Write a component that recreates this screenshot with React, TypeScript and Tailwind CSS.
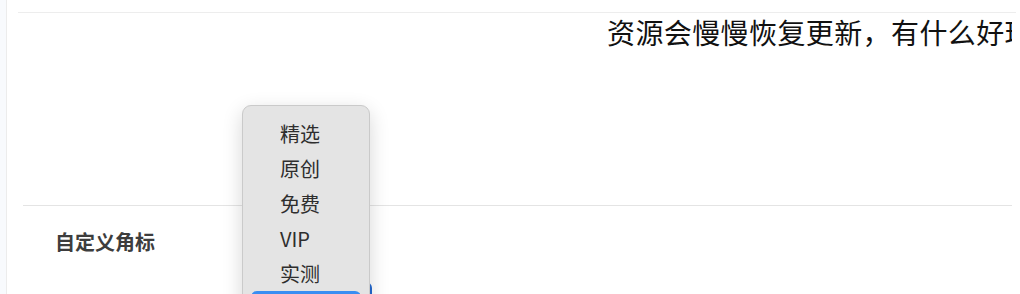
const cjk = "font-['Noto_Sans_CJK_SC','Noto_Sans',sans-serif]";

const badges = ['精选', '原创', '免费', 'VIP', '实测'];

function BadgeMenu() {
  return (
    <>
      {/* the focused select sitting under the native menu */}
      <div className="absolute left-[250px] top-[282px] h-[34px] w-[122px] rounded-md border-[3px] border-[#2469d0]" />
      <div className="absolute left-[242px] top-[105px] h-[230px] w-[128px] rounded-[9px] border border-[#cacaca] bg-[#e4e4e4] pt-[10px] shadow-[0_6px_20px_rgba(0,0,0,0.16)]">
        {badges.map((b) => (
          <div key={b} className="flex h-[35px] items-center pl-[37px] text-[20px] text-[#2e2e2e]">
            {b}
          </div>
        ))}
        <div className="mx-[8px] flex h-[35px] items-center rounded-md bg-[#3a8ef2] pl-[29px] text-[20px] text-white">
          其他
        </div>
      </div>
    </>
  );
}

export default function App() {
  return (
    <div className={`relative flex h-[294px] w-[1020px] overflow-hidden bg-white ${cjk}`}>
      <div className="w-[7px] shrink-0 border-r border-[#ececec] bg-[#f8fafd]" />
      <div className="flex min-w-0 flex-1 flex-col">
        <div className="ml-[11px] mr-[4px] mt-[12px] border-t border-[#ededed]" />
        <div className="mr-[8px] overflow-hidden pl-[600px] leading-[38px]">
          <p className="whitespace-nowrap text-[28px] tracking-[0.4px] text-[#111]">
            资源会慢慢恢复更新，有什么好玩的资源欢迎推荐
          </p>
        </div>
        <div className="ml-[16px] mr-[8px] mt-[154px] border-t border-[#e4e4e4]" />
        <div className="flex h-[72px] items-center pl-[48px]">
          <span className="text-[20px] font-semibold text-[#3d3d3d]">自定义角标</span>
        </div>
      </div>
      <BadgeMenu />
    </div>
  );
}
